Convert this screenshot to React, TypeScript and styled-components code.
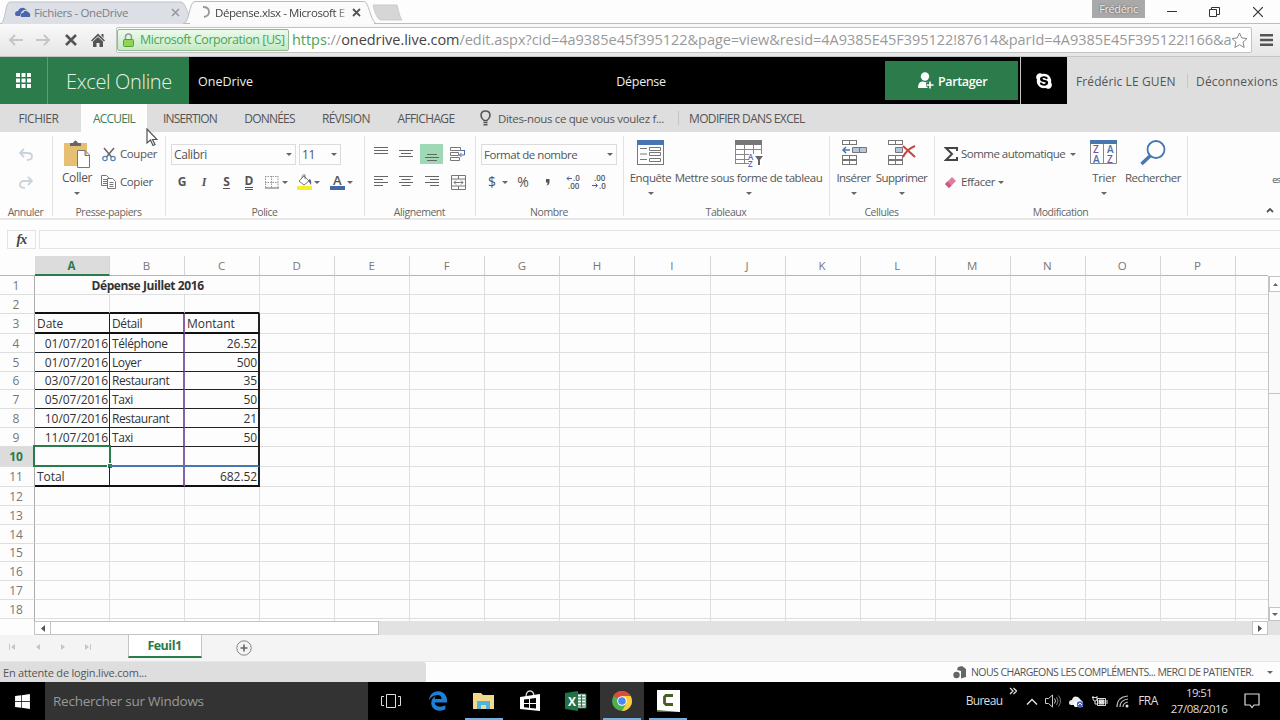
import React from 'react';
import styled, { createGlobalStyle } from 'styled-components';
import { FaEdgeLegacy, FaSkype, FaWindows } from 'react-icons/fa';

const GlobalStyle = createGlobalStyle`
  * {
    box-sizing: border-box;
  }

  body {
    margin: 0;
    overflow: hidden;
    background: #fdfdfd;
    font-family: "Open Sans", "Noto Sans", sans-serif;
    font-size: 12px;
    color: #555;
  }

  svg {
    display: block;
    flex: none;
  }
`;

const Page = styled.div`
  position: relative;
  width: 1280px;
  height: 720px;
  display: flex;
  flex-direction: column;
  overflow: hidden;
`;

const Text = styled.span<{ $size?: number; $ls?: number; $color?: string; $weight?: number }>`
  font-size: ${p => p.$size ?? 12}px;
  letter-spacing: ${p => p.$ls ?? -0.4}px;
  color: ${p => p.$color ?? 'inherit'};
  font-weight: ${p => p.$weight ?? 400};
  line-height: 16px;
  white-space: nowrap;
`;

const Label = styled(Text)`
  font-size: 11.5px;
  letter-spacing: ${p => p.$ls ?? -0.45}px;
`;

const Slot = styled.div<{ $w: number; $left?: boolean }>`
  display: flex;
  flex: none;
  align-items: center;
  justify-content: ${p => (p.$left ? 'flex-start' : 'center')};
  width: ${p => p.$w}px;
  height: 100%;
`;

const Spacer = styled.div`
  flex: 1;
`;

/* browser */

const TabStrip = styled.div`
  display: flex;
  height: 24px;
  background: #fdfdfd;
  border-bottom: 1px solid #bdbdbd;
`;

const TabShapes = styled.svg`
  position: absolute;
  left: 0;
  top: 0;
`;

const BrowserTab = styled.div<{ $w: number; $pad: number }>`
  position: relative;
  display: flex;
  align-items: center;
  flex: none;
  width: ${p => p.$w}px;
  padding: 1px 0 0 ${p => p.$pad}px;
`;

const TabTitle = styled.div<{ $w: number; $gap: number; $fade?: boolean }>`
  width: ${p => p.$w}px;
  margin-left: ${p => p.$gap}px;
  white-space: nowrap;
  ${p => p.$fade && 'mask-image: linear-gradient(90deg, #000 88%, transparent 100%);'}
`;

const UserBadge = styled.div`
  width: 53px;
  height: 18px;
  margin-right: 13px;
  background: #a9a9a9;
  text-align: center;
  text-shadow: 0 0 2px #444;
`;

const Toolbar = styled.div`
  display: flex;
  align-items: center;
  height: 33px;
  background: linear-gradient(#f9f9f9, #e6e6e6);
  border-bottom: 1px solid #c4c4c4;
`;

const Omnibox = styled.div`
  display: flex;
  align-items: center;
  width: 1136px;
  height: 26px;
  overflow: hidden;
  background: #fff;
  border: 1px solid #c2c2c2;
  border-radius: 2px;
`;

const Certificate = styled.div`
  display: flex;
  flex: none;
  align-items: center;
  width: 172px;
  height: 22px;
  margin-right: 3px;
  padding-left: 5px;
  background: linear-gradient(#ecfaec, #c5eac5);
  border: 1px solid #93b993;
  border-radius: 2px;
`;

const Url = styled.div`
  flex: none;
  width: 939px;
  padding-top: 1px;
  white-space: nowrap;
`;

/* application header */

const Header = styled.div`
  display: flex;
  height: 47px;
  background: #000;
  color: #fff;

  span {
    padding-top: 3px;
  }
`;

const Waffle = styled.div`
  display: flex;
  align-items: center;
  justify-content: center;
  width: 48px;
  background: #2b7b4b;
  border-right: 1px solid #5b9d75;
`;

const Brand = styled.div`
  display: flex;
  align-items: center;
  width: 141px;
  padding-left: 18px;
  background: #2b7b4b;
`;

const ShareButton = styled.div`
  display: flex;
  align-items: center;
  width: 133px;
  height: 39px;
  margin: 4px 2px 0 0;
  padding-left: 33px;
  background: #2b7b4b;
`;

const Account = styled.div`
  display: flex;
  align-items: center;
  width: 213px;
  background: #dedede;
  color: #555;
`;

const Bar = styled.div<{ $h: number; $m?: string }>`
  width: 1px;
  height: ${p => p.$h}px;
  margin: ${p => p.$m ?? '0'};
  background: #c6c6c6;
`;

/* ribbon */

const RibbonTabs = styled.div`
  display: flex;
  align-items: center;
  height: 28px;
  background: #dedede;

  span {
    padding-top: 2px;
  }
`;

const RibbonTab = styled.div<{ $w: number; $active?: boolean }>`
  display: flex;
  align-items: center;
  justify-content: center;
  width: ${p => p.$w}px;
  height: 28px;
  background: ${p => (p.$active ? '#fdfdfd' : 'transparent')};
  color: ${p => (p.$active ? '#3f7d5a' : '#555')};
`;

const Ribbon = styled.div`
  display: flex;
  height: 88px;
  padding-top: 4px;
  border-bottom: 2px solid #e8e8e8;
`;

const Group = styled.div<{ $w: number }>`
  display: flex;
  flex-direction: column;
  flex: none;
  width: ${p => p.$w}px;
  height: 80px;
  border-right: 1px solid #e2e2e2;
`;

const GroupBody = styled.div`
  display: flex;
  flex: none;
  height: 68px;
  padding-top: 4px;
`;

const GroupLabel = styled.div`
  padding-right: 1px;
  text-align: center;
  font-size: 10.5px;
  line-height: 17px;
  letter-spacing: -0.45px;
  color: #666;
`;

const Row = styled.div`
  display: flex;
  align-items: center;
  height: 28px;
`;

const BigButton = styled.div<{ $w: number }>`
  display: flex;
  flex-direction: column;
  align-items: center;
  flex: none;
  width: ${p => p.$w}px;
`;

const BigIcon = styled.div`
  display: flex;
  align-items: flex-start;
  height: 30px;
`;

const Select = styled.div<{ $w: number; $m?: string }>`
  display: flex;
  align-items: center;
  justify-content: space-between;
  width: ${p => p.$w}px;
  height: 21px;
  margin: ${p => p.$m ?? '0'};
  padding: 1px 3px 0 2px;
  border: 1px solid #dcdcdc;
`;

const Caret = styled.span<{ $m?: string }>`
  flex: none;
  width: 0;
  height: 0;
  margin: ${p => p.$m ?? '0'};
  border: 3px solid transparent;
  border-top: 3px solid #666;
  border-bottom: 0;
`;

const Highlight = styled.div`
  display: flex;
  align-items: flex-end;
  justify-content: center;
  width: 23px;
  height: 20px;
  padding-bottom: 1px;
  background: #9fd8b4;
`;

const Raised = styled.div`
  padding-bottom: 6px;
`;

const Style = styled.span<{ $kind: 'bold' | 'italic' | 'underline' | 'double' }>`
  font-size: 12px;
  line-height: 12px;
  font-weight: 700;
  font-style: ${p => (p.$kind === 'italic' ? 'italic' : 'normal')};
  font-family: ${p => (p.$kind === 'italic' ? '"Liberation Serif", serif' : 'inherit')};
  border-bottom: ${p => ({ bold: '0', italic: '0', underline: '1px solid #555', double: '3px double #555' }[p.$kind])};
`;

/* formula bar and sheet */

const FormulaBar = styled.div`
  display: flex;
  gap: 3px;
  height: 36px;
  padding: 10px 0 0 7px;
`;

const FormulaCell = styled.div<{ $w: number }>`
  display: flex;
  align-items: center;
  justify-content: center;
  flex: none;
  width: ${p => p.$w}px;
  height: 19px;
  border: 1px solid #e4e4e4;
  font: italic 700 14px "Liberation Serif", serif;
  letter-spacing: -0.8px;
  color: #444;
`;

const SheetArea = styled.div`
  display: flex;
  height: 365px;
`;

const Sheet = styled.div`
  width: 1268px;
  overflow: hidden;
`;

const SheetRow = styled.div<{ $h: number }>`
  display: grid;
  grid-template-columns: 35px 75px repeat(15, 75.07px) 32px;
  height: ${p => p.$h}px;
`;

const Corner = styled.div`
  border-bottom: 1px solid #b5b5b5;
`;

const ColumnHead = styled.div<{ $active?: boolean }>`
  display: flex;
  align-items: center;
  justify-content: center;
  padding-right: 1px;
  border-right: 1px solid #d4d4d4;
  border-bottom: ${p => (p.$active ? '2px solid #2b7b4b' : '1px solid #b5b5b5')};
  background: ${p => (p.$active ? '#dcdcdc' : 'transparent')};
  color: ${p => (p.$active ? '#2b7b4b' : '#777')};
  font-size: 11.5px;
  font-weight: ${p => (p.$active ? 700 : 400)};
`;

const RowHead = styled.div<{ $active?: boolean }>`
  display: flex;
  align-items: center;
  justify-content: center;
  padding-right: 2px;
  border-right: 1px solid #aaa;
  border-bottom: 1px solid #dedede;
  background: ${p => (p.$active ? '#dcdcdc' : 'transparent')};
  color: ${p => (p.$active ? '#2b7b4b' : '#777')};
  font-weight: ${p => (p.$active ? 700 : 400)};
`;

const Cell = styled.div<{ $right?: string; $bottom?: string; $align?: string; $span?: number }>`
  position: relative;
  display: flex;
  align-items: center;
  justify-content: ${p => p.$align ?? 'flex-start'};
  grid-column: span ${p => p.$span ?? 1};
  min-width: 0;
  padding: 1px 1px 0 2px;
  border-right: ${p => p.$right ?? '1px solid #dedede'};
  border-bottom: ${p => p.$bottom ?? '1px solid #dedede'};
  color: #333;
  white-space: nowrap;
`;

const Selection = styled.div`
  position: absolute;
  left: -2px;
  top: -2px;
  right: -2px;
  bottom: -1px;
  border: 2px solid #2b7b4b;

  &::after {
    content: '';
    position: absolute;
    right: -3px;
    bottom: -3px;
    width: 4px;
    height: 4px;
    background: #2b7b4b;
    outline: 1px solid #fff;
  }
`;

const VScroll = styled.div`
  display: flex;
  flex-direction: column;
  justify-content: space-between;
  width: 12px;
  margin-top: 20px;
  background: #fafafa;
  border-left: 1px solid #c4c4c4;
`;

const VThumb = styled.div`
  height: 102px;
  margin-bottom: auto;
  border-bottom: 1px solid #c4c4c4;
`;

const ScrollButton = styled.div<{ $w: number; $h: number }>`
  display: flex;
  align-items: center;
  justify-content: center;
  width: ${p => p.$w}px;
  height: ${p => p.$h}px;
  background: #fff;
  border: 1px solid #c4c4c4;
`;

const HScroll = styled.div`
  display: flex;
  height: 14px;
  margin-left: 34px;
  background: #e2e2e2;
`;

const HThumb = styled.div`
  width: 328px;
  background: #fff;
  border: 1px solid #c4c4c4;
  border-left: 0;
`;

const SheetTabs = styled.div`
  display: flex;
  height: 27px;
  background: #f4f4f4;
  border-bottom: 1px solid #e6e6e6;
`;

const SheetTab = styled.div`
  width: 74px;
  height: 23px;
  margin: 0 31px 0 26px;
  padding: 1px 1px 0 0;
  background: #fff;
  border: solid #c4c4c4;
  border-width: 0 1px;
  border-bottom: 2px solid #2b7b4b;
  text-align: center;
  line-height: 20px;
`;

const StatusBar = styled.div`
  display: flex;
  align-items: center;
  height: 20px;
  background: #fdfdfd;
`;

const StatusBubble = styled.div`
  width: 426px;
  height: 20px;
  padding: 2px 0 0 3px;
  background: #dedede;
  border-top-right-radius: 3px;
`;

/* taskbar */

const Taskbar = styled.div`
  display: flex;
  align-items: center;
  height: 38px;
  background: #000;
  color: #ddd;
`;

const SearchBox = styled.div`
  display: flex;
  align-items: center;
  width: 323px;
  height: 38px;
  padding-left: 8px;
  background: #333;
`;

const TaskItem = styled.div<{ $active?: boolean; $open?: boolean }>`
  display: flex;
  align-items: center;
  justify-content: center;
  width: 44px;
  height: 38px;
  margin: 0 1px;
  background-color: ${p => (p.$active ? '#333' : 'transparent')};
  background-image: ${p => (p.$open ? 'linear-gradient(#76b0e0, #76b0e0)' : 'none')};
  background-size: 38px 2px;
  background-position: center bottom;
  background-repeat: no-repeat;
`;

const Clock = styled.div`
  display: flex;
  flex-direction: column;
  align-items: center;
  width: 74px;
`;

const Cursor = styled.svg`
  position: absolute;
  left: 146px;
  top: 128px;
`;

const Clipped = styled.div`
  position: absolute;
  right: 0;
  top: 170px;
`;

const Lines = ({ widths, anchor }: { widths: number[]; anchor: 'l' | 'c' | 'r' }) => (
    <svg width="14" height={widths.length * 3} stroke="#666">
        {widths.map((w, i) => {
            const x = anchor === 'l' ? 0 : anchor === 'r' ? 14 - w : (14 - w) / 2;
            return <path key={i} d={`M${x} ${i * 3 + 0.5}h${w}`}/>;
        })}
    </svg>
);

const MiniGrid = ({ x, y }: { x: number; y: number }) => (
    <g fill="#fff" stroke="#777">
        <rect x={x} y={y} width="14" height="4"/>
        <path d={`M${x + 7} ${y}v4`}/>
    </g>
);

const columns = 'ABCDEFGHIJKLMNOP'.split('');
const rowHeights = [19, 19, 20, 19, 19, 18, 19, 19, 19, 20, 20, 19, 19, 19, 18, 19, 19, 19];
const expenses: Record<number, string[]> = {
    3: ['Date', 'Détail', 'Montant'],
    4: ['01/07/2016', 'Téléphone', '26.52'],
    5: ['01/07/2016', 'Loyer', '500'],
    6: ['03/07/2016', 'Restaurant', '35'],
    7: ['05/07/2016', 'Taxi', '50'],
    8: ['10/07/2016', 'Restaurant', '21'],
    9: ['11/07/2016', 'Taxi', '50'],
    10: ['', '', ''],
    11: ['Total', '', '682.52'],
};
const rightBorders = ['1px solid #222', '2px solid #8561a8', '2px solid #222'];

const bottomBorder = (row: number, col: number) => {
    if (row === 3 || row === 11) return '2px solid #111';
    if (row === 10) return col === 0 ? undefined : '2px solid #4677b0';
    return '1px solid #222';
};

const BrowserChrome = () => (
    <>
        <TabStrip>
            <TabShapes width="420" height="24">
                <path d="M1 24C6 20 5 2 10 2H181C186 2 189 20 194 24" fill="#dcdfe6" stroke="#c0c3c8"/>
                <path d="M183 24C190 22 189 1.5 195 1.5H364C369 1.5 370 20 376 23.5H183" fill="#fbfbfb" stroke="#bbb"/>
                <path d="M190 24H374" stroke="#fbfbfb" strokeWidth="2"/>
                <path d="M373 5H397Q400 18 402 20H381Q376 19 373 5Z" fill="#d6d6d6" stroke="#cacaca"/>
            </TabShapes>
            <BrowserTab $w={190} $pad={15}>
                <svg width="16" height="10" fill="#4867b0">
                    <path d="M0 7Q0 4 3 4Q5 0 9 1L12 3Q8 2 6 6L5 9H2Q0 9 0 7Z"/>
                    <path d="M6 10Q5 6 8 6Q10 2 13 5Q16 6 15 10Z"/>
                </svg>
                <TabTitle $w={137} $gap={3}><Text $size={11.5} $ls={-0.38} $color="#7b7f86">Fichiers - OneDrive</Text></TabTitle>
                <svg width="9" height="9" stroke="#999" strokeWidth="1.6"><path d="M1 1L8 8M8 1L1 8"/></svg>
            </BrowserTab>
            <BrowserTab $w={180} $pad={10}>
                <svg width="12" height="14" fill="none" stroke="#999" strokeWidth="1.8"><path d="M3 2Q9 2 9 7Q9 11 4 12"/></svg>
                <TabTitle $w={137} $gap={3} $fade><Text $size={11.5} $ls={-0.42} $color="#444">Dépense.xlsx - Microsoft E</Text></TabTitle>
                <svg width="9" height="9" stroke="#555" strokeWidth="1.8"><path d="M1 1L8 8M8 1L1 8"/></svg>
            </BrowserTab>
            <Spacer/>
            <UserBadge><Text $size={11} $ls={-0.4} $color="#eee">Frédéric</Text></UserBadge>
            <Slot $w={28}><svg width="10" height="2" fill="#333"><path d="M0 0h10v1H0z"/></svg></Slot>
            <Slot $w={57}>
                <svg width="11" height="10" fill="none" stroke="#333"><path d="M.5 2.5h7v7h-7zM2.5 2.5v-2h8v7h-3"/></svg>
            </Slot>
            <Slot $w={30}>
                <svg width="10" height="10" stroke="#333" strokeWidth="1.2"><path d="M0 0L10 10M10 0L0 10"/></svg>
            </Slot>
            <Slot $w={7}/>
        </TabStrip>
        <Toolbar>
            <Slot $w={31}>
                <svg width="15" height="12" fill="none" stroke="#c6c6c6" strokeWidth="2"><path d="M15 6H2M7 1L2 6L7 11"/></svg>
            </Slot>
            <Slot $w={25}>
                <svg width="15" height="12" fill="none" stroke="#c6c6c6" strokeWidth="2"><path d="M0 6H13M8 1L13 6L8 11"/></svg>
            </Slot>
            <Slot $w={29}>
                <svg width="12" height="12" stroke="#555" strokeWidth="2.6"><path d="M1 1L11 11M11 1L1 11"/></svg>
            </Slot>
            <Slot $w={26}>
                <svg width="14" height="14" fill="#555">
                    <path d="M7 0.5L14 7.500L13 8.500L7 3L1 8.500L0 7.500ZM10.500 1h2v4l-2-2ZM2 8.500L7 4L12 8.500V14H8.500V10H5.500V14H2Z"/>
                </svg>
            </Slot>
            <Slot $w={5}/>
            <Omnibox>
                <Certificate>
                    <svg width="11" height="14">
                        <path d="M2.500 7V4Q2.500 1 5.500 1Q8.500 1 8.500 4V7" fill="none" stroke="#999" strokeWidth="1.5"/>
                        <rect x=".5" y="6.500" width="10" height="7" rx="1" fill="#8fd553" stroke="#5a9e38"/>
                    </svg>
                    <Slot $w={6}/>
                    <Text $size={12.5} $ls={-0.45} $color="#4aa557">Microsoft Corporation [US]</Text>
                </Certificate>
                <Url>
                    <Text $size={14.5} $ls={-0.04} $color="#4aa557">https</Text>
                    <Text $size={14.5} $ls={-0.04} $color="#999">://</Text>
                    <Text $size={14.5} $ls={-0.04} $color="#444">onedrive.live.com</Text>
                    <Text $size={14.5} $ls={-0.04} $color="#999">
                        /edit.aspx?cid=4a9385e45f395122&amp;page=view&amp;resid=4A9385E45F395122!87614&amp;parId=4A9385E45F395122!166&amp;a
                    </Text>
                </Url>
                <svg width="17" height="17" fill="#fff" stroke="#888">
                    <path d="M8.500 1L10.800 6L16 6.500L12 10.200L13.200 15.500L8.500 12.700L3.800 15.500L5 10.200L1 6.500L6.200 6Z"/>
                </svg>
            </Omnibox>
            <Slot $w={28}>
                <svg width="13" height="12" fill="#555"><path d="M0 0h13v2.500H0zM0 4.700h13v2.500H0zM0 9.400h13v2.500H0z"/></svg>
            </Slot>
        </Toolbar>
    </>
);

const AppHeader = () => (
    <Header>
        <Waffle>
            <svg width="15" height="15" fill="#fff">
                {[0, 1, 2, 3, 4, 5, 6, 7, 8].map(i => (
                    <rect key={i} x={(i % 3) * 5.5} y={Math.floor(i / 3) * 5.5} width="4" height="4"/>
                ))}
            </svg>
        </Waffle>
        <Brand><Text $size={20} $ls={-0.35} $weight={300} $color="#e6f3ea">Excel Online</Text></Brand>
        <Slot $w={417} $left><Slot $w={9}/><Text $ls={0} $size={12.5} $weight={500} $color="#eee">OneDrive</Text></Slot>
        <Slot $w={70}><Text $ls={-0.3} $color="#eee" $weight={500} $size={12.500}>Dépense</Text></Slot>
        <Spacer/>
        <ShareButton>
            <svg width="16" height="17" fill="#fff">
                <circle cx="7" cy="4.500" r="4.200"/>
                <path d="M0 16Q0 9 5 9.500Q8 11 10 9.500V16Z"/>
                <path d="M11.500 9v7M8 12.500h7.500" stroke="#2b7b4b" strokeWidth="4"/>
                <path d="M12 9.500v7M8.500 13h7" stroke="#fff" strokeWidth="1.6"/>
            </svg>
            <Slot $w={4}/>
            <Text $ls={-0.35} $size={12.500} $weight={600} $color="#fff">Partager</Text>
        </ShareButton>
        <Bar $h={47}/>
        <Slot $w={46}><FaSkype size={18} color="#fff"/></Slot>
        <Account>
            <Slot $w={9}/>
            <Slot $w={111} $left><Text $ls={0.1}>Frédéric LE GUEN</Text></Slot>
            <Slot $w={9} $left><Bar $h={14}/></Slot>
            <Text $ls={0.2}>Déconnexions</Text>
        </Account>
    </Header>
);

const FontGroup = () => (
    <Group $w={199}>
        <GroupBody>
            <div>
                <Row>
                    <Select $w={125} $m="0 3px 0 5px"><Text>Calibri</Text><Caret/></Select>
                    <Select $w={42}><Text>11</Text><Caret/></Select>
                </Row>
                <Row>
                    <Slot $w={5}/>
                    <Slot $w={22}><Style $kind="bold">G</Style></Slot>
                    <Slot $w={22}><Style $kind="italic">I</Style></Slot>
                    <Slot $w={23}><Style $kind="underline">S</Style></Slot>
                    <Slot $w={22}><Style $kind="double">D</Style></Slot>
                    <Slot $w={5}/>
                    <svg width="14" height="13" fill="none" stroke="#999" strokeDasharray="1.500 1">
                        <path d="M.5 0v12M6.500 0v12M13 0v12M0 .5h13M0 6.500h13"/>
                        <path d="M0 12h14" stroke="#666" strokeDasharray="none"/>
                    </svg>
                    <Caret $m="0 0 0 3px"/>
                    <Slot $w={9}/>
                    <svg width="16" height="16">
                        <path d="M2 7L7 2L12 7L7 11Z" fill="#fff" stroke="#777"/>
                        <path d="M5 4Q5 0 8 1V5" fill="none" stroke="#777"/>
                        <path d="M12 5Q15 5 14 11L12 8Z" fill="#5062a0"/>
                        <path d="M0 12h15v4H0z" fill="#f7ef2e"/>
                    </svg>
                    <Caret $m="0 0 0 1px"/>
                    <Slot $w={10}/>
                    <svg width="16" height="16">
                        <text x="3" y="11" fontSize="13" fontWeight="600" fill="#555">A</text>
                        <path d="M0 12h15v4H0z" fill="#4467a5"/>
                    </svg>
                    <Caret $m="0 0 0 1px"/>
                </Row>
            </div>
        </GroupBody>
        <GroupLabel>Police</GroupLabel>
    </Group>
);

const AlignGroup = () => (
    <Group $w={111}>
        <GroupBody>
            <div>
                <Row>
                    <Slot $w={3}/>
                    <Slot $w={25}><Raised><Lines widths={[14, 14, 14]} anchor="c"/></Raised></Slot>
                    <Slot $w={25}><Lines widths={[14, 10, 14]} anchor="c"/></Slot>
                    <Slot $w={27}><Highlight><Lines widths={[10, 14, 10]} anchor="c"/></Highlight></Slot>
                    <Slot $w={26}>
                        <svg width="16" height="15" fill="none" stroke="#777">
                            <path d="M.5 .5h10v3H.5zM.5 5.500h8v3H.5zM.5 10.500h9v3H.5z"/>
                            <path d="M11 3.500h4M14.500 4v4h-5M11.500 6L9.500 8L11.500 10" stroke="#4a6ea8"/>
                        </svg>
                    </Slot>
                </Row>
                <Row>
                    <Slot $w={3}/>
                    <Slot $w={25}><Lines widths={[14, 9, 14, 9]} anchor="l"/></Slot>
                    <Slot $w={25}><Lines widths={[14, 9, 14, 9]} anchor="c"/></Slot>
                    <Slot $w={27}><Lines widths={[14, 9, 14, 9]} anchor="r"/></Slot>
                    <Slot $w={26}>
                        <svg width="15" height="15" fill="none" stroke="#777">
                            <path d="M.5 .5h14v14H.5zM.5 4h14M.5 11h14M7.500 .5V4M7.500 11v4M3 7.500h9M5 5.500L3 7.500L5 9.500M10 5.500L12 7.500L10 9.500"/>
                        </svg>
                    </Slot>
                </Row>
            </div>
        </GroupBody>
        <GroupLabel>Alignement</GroupLabel>
    </Group>
);

const Decimals = ({ top, bottom, flip }: { top: string; bottom: string; flip?: boolean }) => (
    <svg width="15" height="14" fontSize="8" fontWeight="600" fill="#555" overflow="visible">
        <text x={flip ? 2 : 7} y="6">{top}</text>
        <text x={flip ? 7 : 2} y="14">{bottom}</text>
        {flip
            ? <path d="M0 10.500h5M3.500 8.500L5.500 10.500L3.500 12.500" fill="none" stroke="#4a5d98"/>
            : <path d="M1 3.500h5M3 1.500L1 3.500L3 5.500" fill="none" stroke="#4a5d98"/>}
    </svg>
);

const NumberGroup = () => (
    <Group $w={148}>
        <GroupBody>
            <div>
                <Row><Select $w={136} $m="0 0 0 5px"><Label $ls={-0.48}>Format de nombre</Label><Caret/></Select></Row>
                <Row>
                    <Slot $w={8}/>
                    <Slot $w={16}><Text $size={14} $ls={0}>$</Text></Slot>
                    <Slot $w={10}><Caret/></Slot>
                    <Slot $w={26}><Text $size={14} $ls={0}>%</Text></Slot>
                    <Slot $w={24}>
                        <svg width="4" height="7" fill="#555"><path d="M0 0H3.500V3Q3.500 6 .5 6.500Q2 4.500 1.500 3.500H0Z"/></svg>
                    </Slot>
                    <Slot $w={26}><Decimals top=".0" bottom=".00"/></Slot>
                    <Slot $w={26}><Decimals top=".00" bottom=".0" flip/></Slot>
                </Row>
            </div>
        </GroupBody>
        <GroupLabel>Nombre</GroupLabel>
    </Group>
);

const RibbonPanel = () => (
    <Ribbon>
        <Group $w={53}>
            <GroupBody>
                <div>
                    <Row><Slot $w={51}>
                        <svg width="14" height="13" fill="none" stroke="#c9d3dc" strokeWidth="1.800"><path d="M5 1L1 5L5 9M1 5H9Q13 5 13 8.500T8 12"/></svg>
                    </Slot></Row>
                    <Row><Slot $w={51}>
                        <svg width="14" height="13" fill="none" stroke="#c9d3dc" strokeWidth="1.800"><path d="M9 1L13 5L9 9M13 5H5Q1 5 1 8.500T6 12"/></svg>
                    </Slot></Row>
                </div>
            </GroupBody>
            <GroupLabel>Annuler</GroupLabel>
        </Group>
        <Group $w={113}>
            <GroupBody>
                <BigButton $w={48}>
                    <BigIcon>
                        <svg width="26" height="29">
                            <path d="M0 3H23V26H0Z" fill="#e6bf73"/>
                            <path d="M6 6V3H9Q11.500 -2 14 3H17V6Z" fill="#666"/>
                            <path d="M13.500 10.500H21L25.500 15V27.500H13.500ZM21 10.500V15.500H25.500" fill="#fff" stroke="#777"/>
                        </svg>
                    </BigIcon>
                    <Text $ls={-0.4}>Coller</Text>
                    <Caret $m="6px 0 0"/>
                </BigButton>
                <div>
                    <Row>
                        <Slot $w={19} $left>
                            <svg width="15" height="15" fill="none" stroke="#666" strokeWidth="1.500">
                                <path d="M3 1L10.500 10M13 1L5.500 10"/>
                                <circle cx="4" cy="11.500" r="2.200" stroke="#5b7fae" strokeWidth="1.200"/>
                                <circle cx="12" cy="11.500" r="2.200" stroke="#5b7fae" strokeWidth="1.200"/>
                            </svg>
                        </Slot>
                        <Label $ls={-0.4}>Couper</Label>
                    </Row>
                    <Row>
                        <Slot $w={19} $left>
                            <svg width="15" height="14" fill="#fff" stroke="#777">
                                <path d="M.5 .5h5l3 3v7h-8zM2 4.500h4M2 6.500h4M2 8.500h4"/>
                                <path d="M6.500 3.500h5l3 3v7h-8zM8.500 7.500h4M8.500 9.500h4M8.500 11.500h4"/>
                            </svg>
                        </Slot>
                        <Label $ls={-0.4}>Copier</Label>
                    </Row>
                </div>
            </GroupBody>
            <GroupLabel>Presse-papiers</GroupLabel>
        </Group>
        <FontGroup/>
        <AlignGroup/>
        <NumberGroup/>
        <Group $w={206}>
            <GroupBody>
                <BigButton $w={53}>
                    <BigIcon>
                        <svg width="27" height="26" fill="#fff" stroke="#777">
                            <rect x=".5" y=".5" width="26" height="24"/>
                            <path d="M0 0h27v5H0z" fill="#4677b0" stroke="none"/>
                            <path d="M3 8.500h7M3 14h7M3 19.500h7M12.500 7.500h11v3h-11zM12.500 12.500h11v3h-11zM12.500 18.500h11v3h-11z"/>
                        </svg>
                    </BigIcon>
                    <Label $ls={-0.4}>Enquête</Label>
                    <Caret $m="6px 0 0"/>
                </BigButton>
                <BigButton $w={143}>
                    <BigIcon>
                        <svg width="28" height="28" fill="#fff" stroke="#888">
                            <rect x=".5" y=".5" width="26" height="23"/>
                            <path d="M0 0h27v5H0z" fill="#777" stroke="none"/>
                            <path d="M1 9.500h25M1 14.500h25M1 19.500h25M9.500 5v18M18.500 5v18"/>
                            <path d="M14 14h14v14H14z" stroke="none"/>
                            <text x="13" y="20" fontSize="8" fontWeight="600" fill="#6264b0" stroke="none">A</text>
                            <text x="13" y="27" fontSize="8" fontWeight="600" fill="#6264b0" stroke="none">Z</text>
                            <path d="M20 16h8l-3 4v5h-2v-5z" fill="#666" stroke="none"/>
                        </svg>
                    </BigIcon>
                    <Label $ls={-0.42}>Mettre sous forme de tableau</Label>
                    <Caret $m="6px 0 0"/>
                </BigButton>
            </GroupBody>
            <GroupLabel>Tableaux</GroupLabel>
        </Group>
        <Group $w={105}>
            <GroupBody>
                <BigButton $w={47}>
                    <BigIcon>
                        <svg width="26" height="26">
                            <MiniGrid x={1.5} y={.5}/>
                            <MiniGrid x={1.5} y={15.5}/>
                            <MiniGrid x={1.5} y={20.5}/>
                            <path d="M11.500 7.500h14v5h-14zM18.500 7.500v5" fill="#b5c6dd" stroke="#777"/>
                            <path d="M9 10H2M5 7L2 10L5 13" fill="none" stroke="#4677b0" strokeWidth="1.500"/>
                        </svg>
                    </BigIcon>
                    <Label $ls={-0.55}>Insérer</Label>
                    <Caret $m="6px 0 0"/>
                </BigButton>
                <BigButton $w={49}>
                    <BigIcon>
                        <svg width="28" height="26">
                            <MiniGrid x={.5} y={.5}/>
                            <MiniGrid x={.5} y={15.5}/>
                            <MiniGrid x={.5} y={20.5}/>
                            <path d="M7.500 7.500h7v5h-7z" fill="#b5c6dd" stroke="#777"/>
                            <path d="M15 6L27 17M27 6Q19 9 15 17" fill="none" stroke="#c9453f" strokeWidth="2"/>
                        </svg>
                    </BigIcon>
                    <Label $ls={-0.6}>Supprimer</Label>
                    <Caret $m="6px 0 0"/>
                </BigButton>
            </GroupBody>
            <GroupLabel>Cellules</GroupLabel>
        </Group>
        <Group $w={253}>
            <GroupBody>
                <Slot $w={9}/>
                <div>
                    <Row>
                        <Slot $w={17} $left>
                            <svg width="14" height="14" fill="none" stroke="#444" strokeWidth="2"><path d="M13 4V1H2L8 7L2 13H13V10"/></svg>
                        </Slot>
                        <Slot $w={109} $left><Label $ls={-0.52}>Somme automatique</Label></Slot>
                        <Caret/>
                    </Row>
                    <Row>
                        <Slot $w={17} $left>
                            <svg width="14" height="13"><path d="M1 8L8 1L12 5L5 12Z" fill="#dd7f9c"/><path d="M1 8L3.500 5.500L7.500 9.500L5 12Z" fill="#c75c80"/></svg>
                        </Slot>
                        <Slot $w={37} $left><Label>Effacer</Label></Slot>
                        <Caret/>
                    </Row>
                </div>
                <Slot $w={8}/>
                <BigButton $w={40}>
                    <BigIcon>
                        <svg width="28" height="25" fill="#fff" stroke="#888">
                            <path d="M.5 .5h26v23H.5zM13.500 1v23"/>
                            <path d="M0 0h27v4H0z" fill="#4677b0" stroke="none"/>
                            <g fontSize="10" fontWeight="600" stroke="none">
                                <text x="3" y="13" fill="#7a52a0">Z</text>
                                <text x="3" y="23" fill="#4a6ea8">A</text>
                                <text x="17" y="13" fill="#4a6ea8">A</text>
                                <text x="17" y="23" fill="#7a52a0">Z</text>
                            </g>
                        </svg>
                    </BigIcon>
                    <Label $ls={-0.3}>Trier</Label>
                    <Caret $m="6px 0 0"/>
                </BigButton>
                <BigButton $w={58}>
                    <BigIcon>
                        <svg width="26" height="26" fill="none" stroke="#4677b0">
                            <circle cx="16" cy="9.500" r="8.500" strokeWidth="1.800"/>
                            <path d="M10 16L1.500 24" strokeWidth="3.500"/>
                        </svg>
                    </BigIcon>
                    <Label $ls={-0.5}>Rechercher</Label>
                </BigButton>
            </GroupBody>
            <GroupLabel>Modification</GroupLabel>
        </Group>
        <Spacer/>
        <Slot $w={20}>
            <svg width="8" height="72" fill="none" stroke="#555" strokeWidth="1.800"><path d="M1 71L4 68L7 71"/></svg>
        </Slot>
    </Ribbon>
);

const Spreadsheet = () => (
    <SheetArea>
        <Sheet>
            <SheetRow $h={20}>
                <Corner/>
                {columns.map(c => <ColumnHead key={c} $active={c === 'A'}>{c}</ColumnHead>)}
                <Corner/>
            </SheetRow>
            {rowHeights.map((h, i) => {
                const row = i + 1;
                const data = expenses[row];
                const rest = columns.slice(3);
                return (
                    <SheetRow key={row} $h={h}>
                        <RowHead $active={row === 10}>{row}</RowHead>
                        {row === 1 && <Cell $span={3} $align="center"><Text $weight={700} $ls={-0.42}>Dépense Juillet 2016</Text></Cell>}
                        {row > 1 && columns.slice(0, 3).map((c, col) => (
                            <Cell
                                key={c}
                                $right={data && rightBorders[col]}
                                $bottom={data ? bottomBorder(row, col) : row === 2 ? '2px solid #111' : undefined}
                                $align={data && row > 3 && (col === 2 || (col === 0 && row < 10)) ? 'flex-end' : 'flex-start'}
                            >
                                {data && <Text $ls={col === 1 ? -0.4 : -0.05}>{data[col]}</Text>}
                                {row === 10 && col === 0 && <Selection/>}
                            </Cell>
                        ))}
                        {rest.map(c => <Cell key={c}/>)}
                        <Cell $right="0"/>
                    </SheetRow>
                );
            })}
            <SheetRow $h={5}>
                <Cell $right="1px solid #aaa" $bottom="0"/>
                {columns.map(c => <Cell key={c} $bottom="0"/>)}
            </SheetRow>
        </Sheet>
        <VScroll>
            <ScrollButton $w={12} $h={16}>
                <svg width="5" height="3" fill="#666"><path d="M2.500 0L5 3H0Z"/></svg>
            </ScrollButton>
            <VThumb/>
            <ScrollButton $w={12} $h={14}><Caret/></ScrollButton>
        </VScroll>
    </SheetArea>
);

const TaskIcons = () => (
    <>
        <Slot $w={46}>
            <svg width="20" height="14" fill="none" stroke="#ddd"><path d="M5.500 .5h9v13h-9zM3 2.500H.5v9H3M17 2.500h2.500v9H17"/></svg>
        </Slot>
        <Slot $w={1}/>
        <TaskItem><FaEdgeLegacy size={20} color="#1d7fd6"/></TaskItem>
        <TaskItem $open>
            <svg width="22" height="18">
                <path d="M0 1H8L10 3H21V17H0Z" fill="#f0d98a"/>
                <path d="M4 17V9H17V17H13V13H8V17Z" fill="#4eb3e0"/>
            </svg>
        </TaskItem>
        <TaskItem>
            <svg width="20" height="22" fill="none">
                <path d="M6 7Q6 1 10 1T14 7" stroke="#ddd" strokeWidth="1.300"/>
                <path d="M0 7L20 4V21L0 19Z" fill="#fff"/>
                <path d="M4 9.500L9 9V13H4ZM10 8.800L16 8V13H10ZM4 14H9V17.700L4 17.300ZM10 14H16V18.500L10 17.900Z" fill="#000"/>
            </svg>
        </TaskItem>
        <TaskItem>
            <svg width="22" height="20">
                <path d="M11 3H21V17H11Z" fill="#fff" stroke="#217346"/>
                <path d="M13 6h7M13 9h7M13 12h7M13 15h7M16.500 4v12" stroke="#217346" strokeWidth="1.200"/>
                <path d="M0 2L13 0V20L0 18Z" fill="#217346"/>
                <text x="3" y="14.500" fontSize="12" fontWeight="700" fill="#fff">X</text>
            </svg>
        </TaskItem>
        <TaskItem $active $open>
            <svg width="20" height="20">
                <circle cx="10" cy="10" r="10" fill="#4caf50"/>
                <path d="M10 10L1.340 5A10 10 0 0 1 18.660 5Z" fill="#dd4b3e"/>
                <path d="M10 5H18.660A10 10 0 0 1 10 20L14.300 12.500Z" fill="#fccd3f"/>
                <circle cx="10" cy="10" r="4.800" fill="#fff"/>
                <circle cx="10" cy="10" r="3.800" fill="#4a87ee"/>
            </svg>
        </TaskItem>
        <TaskItem $open>
            <svg width="23" height="22">
                <path d="M0 0h23v22H0z" fill="#fff"/>
                <path d="M0 20L23 22H0Z" fill="#556b1f"/>
                <path d="M16 5.500H9L7.500 7V13L9 14.500H16" fill="none" stroke="#46601f" strokeWidth="2.800"/>
            </svg>
        </TaskItem>
    </>
);

const SystemTray = () => (
    <>
        <Slot $w={38}><Text $ls={-0.7}>Bureau</Text></Slot>
        <Slot $w={19}>
            <svg width="8" height="28" fill="none" stroke="#ddd" strokeWidth="1.300"><path d="M1 1L4 4L1 7M4.500 1L7.500 4L4.500 7"/></svg>
        </Slot>
        <Slot $w={19}>
            <svg width="12" height="7" fill="none" stroke="#ddd" strokeWidth="1.500"><path d="M1 6.500L6 1.500L11 6.500"/></svg>
        </Slot>
        <Slot $w={24}>
            <svg width="16" height="14" fill="none" stroke="#ccc"><path d="M.5 4.500h3L7.500 1v12L3.500 9.500h-3zM9.500 4.500q2 2.500 0 5"/><path d="M11.500 3q3 4 0 8M13.500 1.500q4 5.500 0 11" stroke="#777"/></svg>
        </Slot>
        <Slot $w={23}>
            <svg width="15" height="13">
                <path d="M0 8Q0 5 3 5Q4 0 9 2L12 5L6 10H2Q0 10 0 8Z" fill="#eee"/>
                <path d="M5 11Q4 7 8 7Q11 3 14 7V12H6Z" fill="#fff"/>
                <circle cx="11" cy="9.500" r="3.200" fill="#4d63c0"/>
                <path d="M9 10L11 8L13 10" stroke="#fff" fill="none"/>
            </svg>
        </Slot>
        <Slot $w={23}>
            <svg width="16" height="12" fill="none" stroke="#ddd">
                <path d="M5.500 3.500h8v7h-8z" fill="#000"/><path d="M7 5h5v4H7z" fill="#ddd"/><path d="M15 5v4M1 1v3q0 2 2 2t2-2V1M3 6v3h2M0 2.500h5"/>
            </svg>
        </Slot>
        <Slot $w={23}>
            <svg width="14" height="13" fill="none" stroke="#bbb" strokeWidth="1.200">
                <path d="M1 12Q1 2 12 1M4 12Q4 5 12 4M7 12Q7 8 12 7"/><circle cx="11" cy="11" r="1.500" fill="#ddd" stroke="none"/>
            </svg>
        </Slot>
        <Slot $w={28}><Text $ls={-0.5}>FRA</Text></Slot>
        <Clock><Text $size={11.5} $ls={-0.7}>19:51</Text><Text $size={11.5} $ls={-0.45}>27/08/2016</Text></Clock>
        <Slot $w={31}>
            <svg width="16" height="16" fill="none" stroke="#ddd" strokeWidth="1.200"><path d="M1 1H15V12H10L8 14.500L6 12H1Z"/></svg>
        </Slot>
        <Slot $w={13}/>
    </>
);

const App = () => (
    <Page>
        <GlobalStyle/>
        <BrowserChrome/>
        <AppHeader/>
        <RibbonTabs>
            <RibbonTab $w={77}><Text $ls={-0.5}>FICHIER</Text></RibbonTab>
            <Slot $w={4}/>
            <RibbonTab $w={66} $active><Text $ls={-0.8}>ACCUEIL</Text></RibbonTab>
            <RibbonTab $w={86}><Text $ls={-0.8}>INSERTION</Text></RibbonTab>
            <RibbonTab $w={73}><Text $ls={-0.8}>DONNÉES</Text></RibbonTab>
            <RibbonTab $w={80}><Text $ls={-0.6}>RÉVISION</Text></RibbonTab>
            <RibbonTab $w={80}><Text $ls={-0.65}>AFFICHAGE</Text></RibbonTab>
            <Slot $w={14}/>
            <svg width="12" height="16" fill="none" stroke="#555" strokeWidth="1.600">
                <path d="M4 10.500Q1 8 1 5.500Q1 1 5.500 1T10 5.500Q10 8 7 10.500Z"/><path d="M3.500 12.500h4M3.500 14.800h4"/>
            </svg>
            <Slot $w={6}/>
            <Slot $w={180} $left><Label $ls={-0.34}>Dites-nous ce que vous voulez f...</Label></Slot>
            <Bar $h={14} $m="0 10px 0 0"/>
            <Text $ls={-0.65}>MODIFIER DANS EXCEL</Text>
        </RibbonTabs>
        <RibbonPanel/>
        <FormulaBar>
            <FormulaCell $w={29}>fx</FormulaCell>
            <FormulaCell $w={1245}/>
        </FormulaBar>
        <Spreadsheet/>
        <HScroll>
            <ScrollButton $w={17} $h={14}><svg width="4" height="7" fill="#555"><path d="M4 0L0 3.500L4 7Z"/></svg></ScrollButton>
            <HThumb/>
            <Spacer/>
            <ScrollButton $w={16} $h={14}><svg width="4" height="7" fill="#555"><path d="M0 0L4 3.500L0 7Z"/></svg></ScrollButton>
            <Slot $w={12}/>
        </HScroll>
        <SheetTabs>
            <svg width="102" height="24" fill="#c6c6c6">
                <path d="M9 9h1v6H9zM15 9L11 12L15 15ZM40 9L36 12L40 15ZM61 9L65 12L61 15ZM85 9L89 12L85 15ZM90 9h1v6h-1z"/>
            </svg>
            <SheetTab><Text $size={12.500} $weight={700} $ls={-0.5} $color="#2b7b4b">Feuil1</Text></SheetTab>
            <Slot $w={22}>
                <svg width="16" height="16" fill="none" stroke="#888"><circle cx="8" cy="8" r="7.200"/><path d="M4.500 8h7M8 4.500v7" stroke="#666" strokeWidth="1.600"/></svg>
            </Slot>
        </SheetTabs>
        <StatusBar>
            <StatusBubble><Text $size={11} $ls={-0.2}>En attente de login.live.com...</Text></StatusBubble>
            <Spacer/>
            <svg width="14" height="13" fill="#666"><path d="M5 1L9 0L13 3V11L8 12.500V5L4 4Z"/><circle cx="3.500" cy="9" r="3.200"/></svg>
            <Slot $w={4}/>
            <Slot $w={296} $left><Text $size={10.5} $ls={-0.55}>NOUS CHARGEONS LES COMPLÉMENTS... MERCI DE PATIENTER.</Text></Slot>
            <Caret $m="0 7px 0 0"/>
        </StatusBar>
        <Taskbar>
            <Slot $w={45}><FaWindows size={17} color="#fff"/></Slot>
            <SearchBox><Text $size={13.5} $ls={-0.25} $color="#999">Rechercher sur Windows</Text></SearchBox>
            <TaskIcons/>
            <Spacer/>
            <SystemTray/>
        </Taskbar>
        <Clipped><Text $size={9} $ls={-0.8}>es</Text></Clipped>
        <Cursor width="12" height="20" fill="#fff" stroke="#555" strokeWidth="1.200">
            <path d="M1 1V15L4.500 12L7 17.500L9 16.500L6.500 11.500H11Z"/>
        </Cursor>
    </Page>
);

export default App;
